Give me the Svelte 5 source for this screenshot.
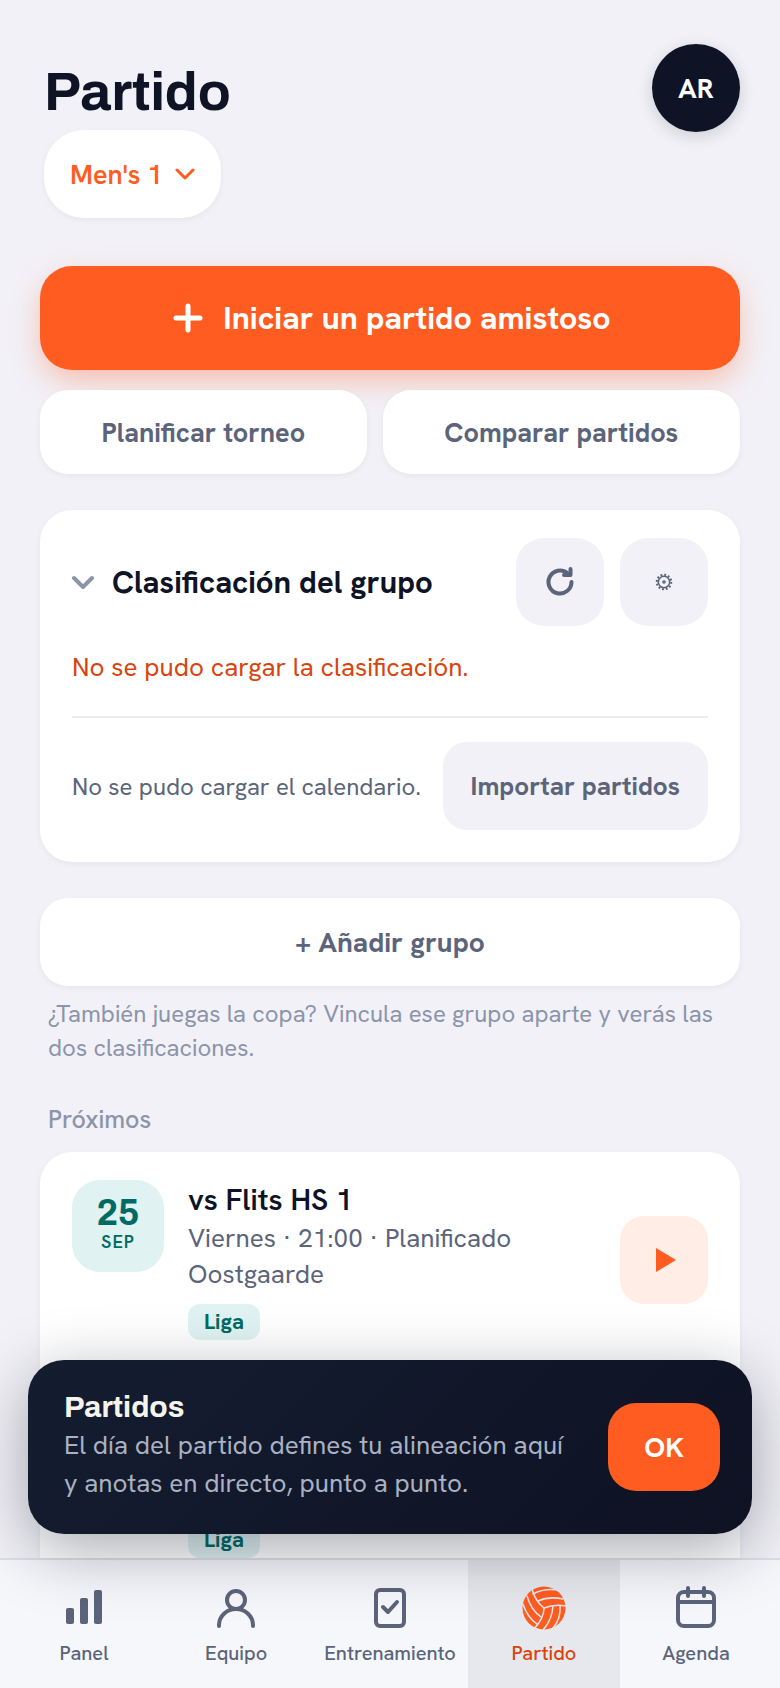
<script>
  const teams = ["Men's 1", "Men's 2"];
  let team = $state(teams[0]);
  let groupOpen = $state(true);
  let showTip = $state(true);
  let activeTab = $state('partido');

  const matches = [
    { day: 25, month: 'SEP', title: 'vs Flits HS 1', when: 'Viernes · 21:00 · Planificado', place: 'Oostgaarde', tag: 'Liga' },
    { day: 2, month: 'OCT', title: 'vs Kalinko HS 2', when: 'Viernes · 20:30 · Planificado', place: 'Oostgaarde', tag: 'Liga' }
  ];

  const tabs = [
    { id: 'panel', label: 'Panel' },
    { id: 'equipo', label: 'Equipo' },
    { id: 'entrenamiento', label: 'Entrenamiento' },
    { id: 'partido', label: 'Partido' },
    { id: 'agenda', label: 'Agenda' }
  ];
</script>

<div class="app">
  <main>
    <header>
      <div>
        <h1>Partido</h1>
        <div class="team">
          <select aria-label="Equipo" bind:value={team}>
            {#each teams as name}
              <option>{name}</option>
            {/each}
          </select>
          <svg width="20" height="13" viewBox="0 0 20 13"><path d="M2 2l8 8 8-8" /></svg>
        </div>
      </div>
      <button class="avatar">AR</button>
    </header>

    <button class="primary">
      <svg width="30" height="30" viewBox="0 0 30 30"><path d="M15 3v24M3 15h24" /></svg>
      Iniciar un partido amistoso
    </button>

    <div class="actions">
      <button class="white">Planificar torneo</button>
      <button class="white">Comparar partidos</button>
    </div>

    <section class="card group">
      <div class="group-head">
        <button class="toggle" aria-expanded={groupOpen} onclick={() => (groupOpen = !groupOpen)}>
          <svg width="22" height="14" viewBox="0 0 22 14"><path d="M2 3l9 9 9-9" /></svg>
          Clasificación del grupo
        </button>
        <button class="square" aria-label="Actualizar">
          <svg class="reload" width="28" height="30" viewBox="0 0 28 30">
            <path d="M25.500 15A11.500 11.500 0 1 1 21.500 6.300" />
            <path d="M24.500 2v6h-6.500" />
          </svg>
        </button>
        <button class="square" aria-label="Ajustes">
          <svg class="gear" width="18" height="18" viewBox="0 0 18 18">
            <circle cx="9" cy="9" r="5.700" stroke-width="1.600" />
            <circle cx="9" cy="9" r="7.300" stroke-width="2" stroke-dasharray="1.900 1.922" />
            <circle cx="9" cy="9" r="1" stroke-width="1.600" />
          </svg>
        </button>
      </div>
      {#if groupOpen}
        <p class="error">No se pudo cargar la clasificación.</p>
        <div class="import">
          <p>No se pudo cargar el calendario.</p>
          <button>Importar partidos</button>
        </div>
      {/if}
    </section>

    <button class="white add">+ Añadir grupo</button>
    <p class="hint">¿También juegas la copa? Vincula ese grupo aparte y verás las dos clasificaciones.</p>

    <h2>Próximos</h2>
    <ul class="card matches">
      {#each matches as match}
        <li>
          <div class="date">
            <strong>{match.day}</strong>
            <span>{match.month}</span>
          </div>
          <div class="info">
            <h3>{match.title}</h3>
            <p>{match.when}</p>
            <p>{match.place}</p>
            <span class="tag">{match.tag}</span>
          </div>
          <button class="play" aria-label="Empezar {match.title}">
            <svg width="20" height="24" viewBox="0 0 20 24"><path d="M0 0l20 12L0 24z" /></svg>
          </button>
        </li>
      {/each}
    </ul>
  </main>

  {#if showTip}
    <div class="tip" role="status">
      <div class="tip-text">
        <strong>Partidos</strong>
        <p>El día del partido defines tu alineación aquí y anotas en directo, punto a punto.</p>
      </div>
      <button onclick={() => (showTip = false)}>OK</button>
    </div>
  {/if}

  <nav>
    {#each tabs as tab}
      <a href="#{tab.id}" class:active={activeTab === tab.id} onclick={() => (activeTab = tab.id)}>
        <svg width="44" height="44" viewBox="0 0 44 44">
          {#if tab.id === 'panel'}
            <g class="solid">
              <rect x="4" y="22" width="8" height="16" rx="2" />
              <rect x="18" y="12" width="8" height="26" rx="2" />
              <rect x="32" y="4" width="8" height="34" rx="2" />
            </g>
          {:else if tab.id === 'equipo'}
            <circle cx="22" cy="14" r="9" />
            <path d="M5 40v-1a17 16 0 0 1 34 0v1" />
          {:else if tab.id === 'entrenamiento'}
            <rect x="8" y="4" width="28" height="36" rx="4" />
            <path d="M15 21l5 5 9-10" />
          {:else if tab.id === 'partido'}
            <circle class="ball" cx="22" cy="22" r="21.500" />
            <g class="seams">
              <path d="M10 3Q13 15 22 22Q32 18 44 20" />
              <path d="M22 22Q22 32 12 43" />
              <path d="M11 8Q22 2 36 4" />
              <path d="M16 15Q27 10 41 13" />
              <path d="M31 20Q30 34 21 44" />
              <path d="M38 20Q39 33 31 42" />
              <path d="M5 10Q9 24 19 31" />
              <path d="M1 18Q5 31 15 38" />
            </g>
          {:else}
            <rect x="4" y="6" width="36" height="34" rx="6" />
            <path d="M4 16h36M14 2v8M30 2v8" />
          {/if}
        </svg>
        {tab.label}
      </a>
    {/each}
  </nav>
</div>

<style>
  :global(body) {
    margin: 0;
    background: #f2f1f7;
  }

  .app {
    --ink: #0e1325;
    --slate: #5b647a;
    --muted: #8b94aa;
    --orange: #ff5c21;
    --heading: Archivo, 'Liberation Sans', Arial, sans-serif;
    position: relative;
    display: flex;
    flex-direction: column;
    height: 100vh;
    font-family: 'Hanken Grotesk', Inter, sans-serif;
    color: var(--ink);
  }

  main {
    flex: 1;
    min-height: 0;
    overflow-y: auto;
    scrollbar-width: none;
    padding: 44px 40px 0;
  }

  h1, h2, h3, p, ul {
    margin: 0;
    padding: 0;
  }

  button {
    border: 0;
    padding: 0;
    font: inherit;
    color: inherit;
    cursor: pointer;
  }

  svg {
    display: block;
    flex-shrink: 0;
    fill: none;
    stroke: currentColor;
    stroke-width: 4;
    stroke-linecap: round;
    stroke-linejoin: round;
  }

  header {
    display: flex;
    justify-content: space-between;
    align-items: flex-start;
    padding-left: 4px;
    margin-bottom: 48px;
  }

  h1 {
    font-family: var(--heading);
    font-size: 54px;
    line-height: 60px;
    font-weight: 700;
    padding-top: 18px;
    margin-bottom: 8px;
  }

  .team {
    position: relative;
    display: inline-block;
    vertical-align: top;
    color: var(--orange);
  }

  .team select {
    appearance: none;
    height: 88px;
    padding: 0 58px 0 26px;
    border: 0;
    border-radius: 40px;
    background: #fff;
    box-shadow: 0 2px 6px rgba(14, 19, 37, 0.05);
    font: inherit;
    font-size: 27px;
    font-weight: 600;
    color: inherit;
  }

  .team svg {
    position: absolute;
    right: 26px;
    top: 38px;
    stroke-width: 3;
    pointer-events: none;
  }

  .avatar {
    width: 88px;
    height: 88px;
    border-radius: 50%;
    background: var(--ink);
    box-shadow: 0 4px 16px rgba(14, 19, 37, 0.16);
    color: #fff;
    font-size: 28px;
    font-weight: 700;
  }

  .primary {
    display: flex;
    align-items: center;
    justify-content: center;
    gap: 20px;
    width: 100%;
    height: 104px;
    padding-left: 4px;
    margin-bottom: 20px;
    border-radius: 32px;
    background: var(--orange);
    box-shadow: 0 12px 32px -4px rgba(255, 92, 33, 0.4);
    color: #fff;
    font-size: 32px;
    font-weight: 700;
  }

  .primary svg {
    stroke-width: 5;
  }

  .actions {
    display: flex;
    gap: 16px;
    margin-bottom: 36px;
  }

  .white {
    position: relative;
    height: 88px;
    border-radius: 28px;
    background: #fff;
    box-shadow: 0 2px 6px rgba(14, 19, 37, 0.05);
    color: var(--slate);
    font-size: 27px;
    font-weight: 700;
  }

  .actions .white {
    flex: 1 1 auto;
    height: 84px;
  }

  .card {
    border-radius: 32px;
    background: #fff;
    box-shadow: 0 2px 6px rgba(14, 19, 37, 0.05);
  }

  .group {
    padding: 28px 32px 32px;
    margin-bottom: 36px;
  }

  .group-head {
    display: flex;
    gap: 16px;
  }

  .toggle {
    flex: 1;
    display: flex;
    align-items: center;
    gap: 18px;
    background: none;
    font-size: 31px;
    font-weight: 700;
    text-align: left;
  }

  .toggle svg {
    color: var(--muted);
    stroke-width: 4;
  }

  .square,
  .play {
    display: grid;
    place-items: center;
    width: 88px;
    height: 88px;
    flex-shrink: 0;
    border-radius: 28px;
    background: #f2f1f7;
    color: var(--slate);
  }

  .gear {
    stroke-linecap: butt;
  }

  .error {
    margin: 24px 0 32px;
    font-size: 26px;
    line-height: 34px;
    color: #d9440e;
  }

  .import {
    display: flex;
    align-items: center;
    justify-content: space-between;
    padding-top: 24px;
    border-top: 2px solid #ededf0;
    color: var(--slate);
    font-size: 24px;
  }

  .import button {
    height: 88px;
    padding: 0 28px;
    border-radius: 24px;
    background: #f2f1f7;
    font-size: 26px;
    font-weight: 700;
    white-space: nowrap;
  }

  .add {
    width: 100%;
    margin-bottom: 11px;
    font-size: 28px;
  }

  .hint {
    padding: 0 8px;
    margin-bottom: 39px;
    font-size: 24px;
    line-height: 34px;
    color: var(--muted);
  }

  h2 {
    padding: 0 8px;
    margin-bottom: 16px;
    font-size: 25px;
    line-height: 32px;
    font-weight: 500;
    color: var(--muted);
  }

  .matches {
    list-style: none;
  }

  .matches li {
    display: flex;
    align-items: center;
    gap: 24px;
    padding: 28px 32px;
  }

  .matches li + li {
    border-top: 2px solid #ededf0;
  }

  .date {
    display: flex;
    flex-direction: column;
    align-items: center;
    align-self: flex-start;
    box-sizing: border-box;
    width: 92px;
    height: 92px;
    padding-top: 16px;
    border-radius: 28px;
    background: #e0f2f1;
    color: #006b64;
  }

  .date strong {
    font-family: var(--heading);
    font-size: 36px;
    line-height: 34px;
  }

  .date span {
    font-size: 18px;
    line-height: 24px;
    font-weight: 600;
    letter-spacing: 1px;
  }

  .info {
    flex: 1;
    color: var(--slate);
    font-size: 26px;
    line-height: 36px;
  }

  .info h3 {
    font-size: 30px;
    line-height: 40px;
    font-weight: 600;
    color: var(--ink);
  }

  .tag {
    display: block;
    width: fit-content;
    margin-top: 12px;
    padding: 0 16px;
    border-radius: 12px;
    background: #e0f2f1;
    color: #006b64;
    font-size: 22px;
    font-weight: 700;
  }

  .play {
    border-radius: 24px;
    background: #ffede6;
    color: var(--orange);
  }

  .play svg {
    margin-left: 4px;
    fill: currentColor;
    stroke: none;
  }

  .tip {
    position: absolute;
    left: 28px;
    right: 28px;
    bottom: 154px;
    z-index: 2;
    display: flex;
    align-items: center;
    gap: 36px;
    box-sizing: border-box;
    min-height: 174px;
    padding: 24px 32px 24px 36px;
    border-radius: 36px;
    background: linear-gradient(135deg, #141d30, #0e1223);
    box-shadow: 0 16px 64px rgba(14, 19, 37, 0.36);
  }

  .tip-text {
    flex: 1;
    padding-bottom: 5px;
    font-size: 26px;
    line-height: 38px;
    color: #a9b1c3;
  }

  .tip strong {
    display: block;
    font-family: var(--heading);
    font-size: 30px;
    color: #f6f3ec;
  }

  .tip button {
    width: 112px;
    height: 88px;
    flex-shrink: 0;
    border-radius: 28px;
    background: var(--orange);
    color: #fff;
    font-size: 28px;
    font-weight: 700;
  }

  nav {
    display: flex;
    padding: 0 8px;
    border-top: 2px solid #dfdfe6;
    background: #f6f7fb;
  }

  nav a {
    flex: 1;
    display: flex;
    flex-direction: column;
    align-items: center;
    gap: 11px;
    box-sizing: border-box;
    height: 128px;
    padding: 26px 12px 0;
    color: var(--slate);
    font-size: 20px;
    line-height: 24px;
    font-weight: 500;
    text-decoration: none;
  }

  nav a.active {
    background: #e7e8ed;
    color: #d9440e;
  }

  .solid,
  .ball {
    fill: currentColor;
    stroke: none;
  }

  .ball {
    color: var(--orange);
  }

  .seams {
    stroke: #e7e8ed;
    stroke-width: 1.500;
  }
</style>
